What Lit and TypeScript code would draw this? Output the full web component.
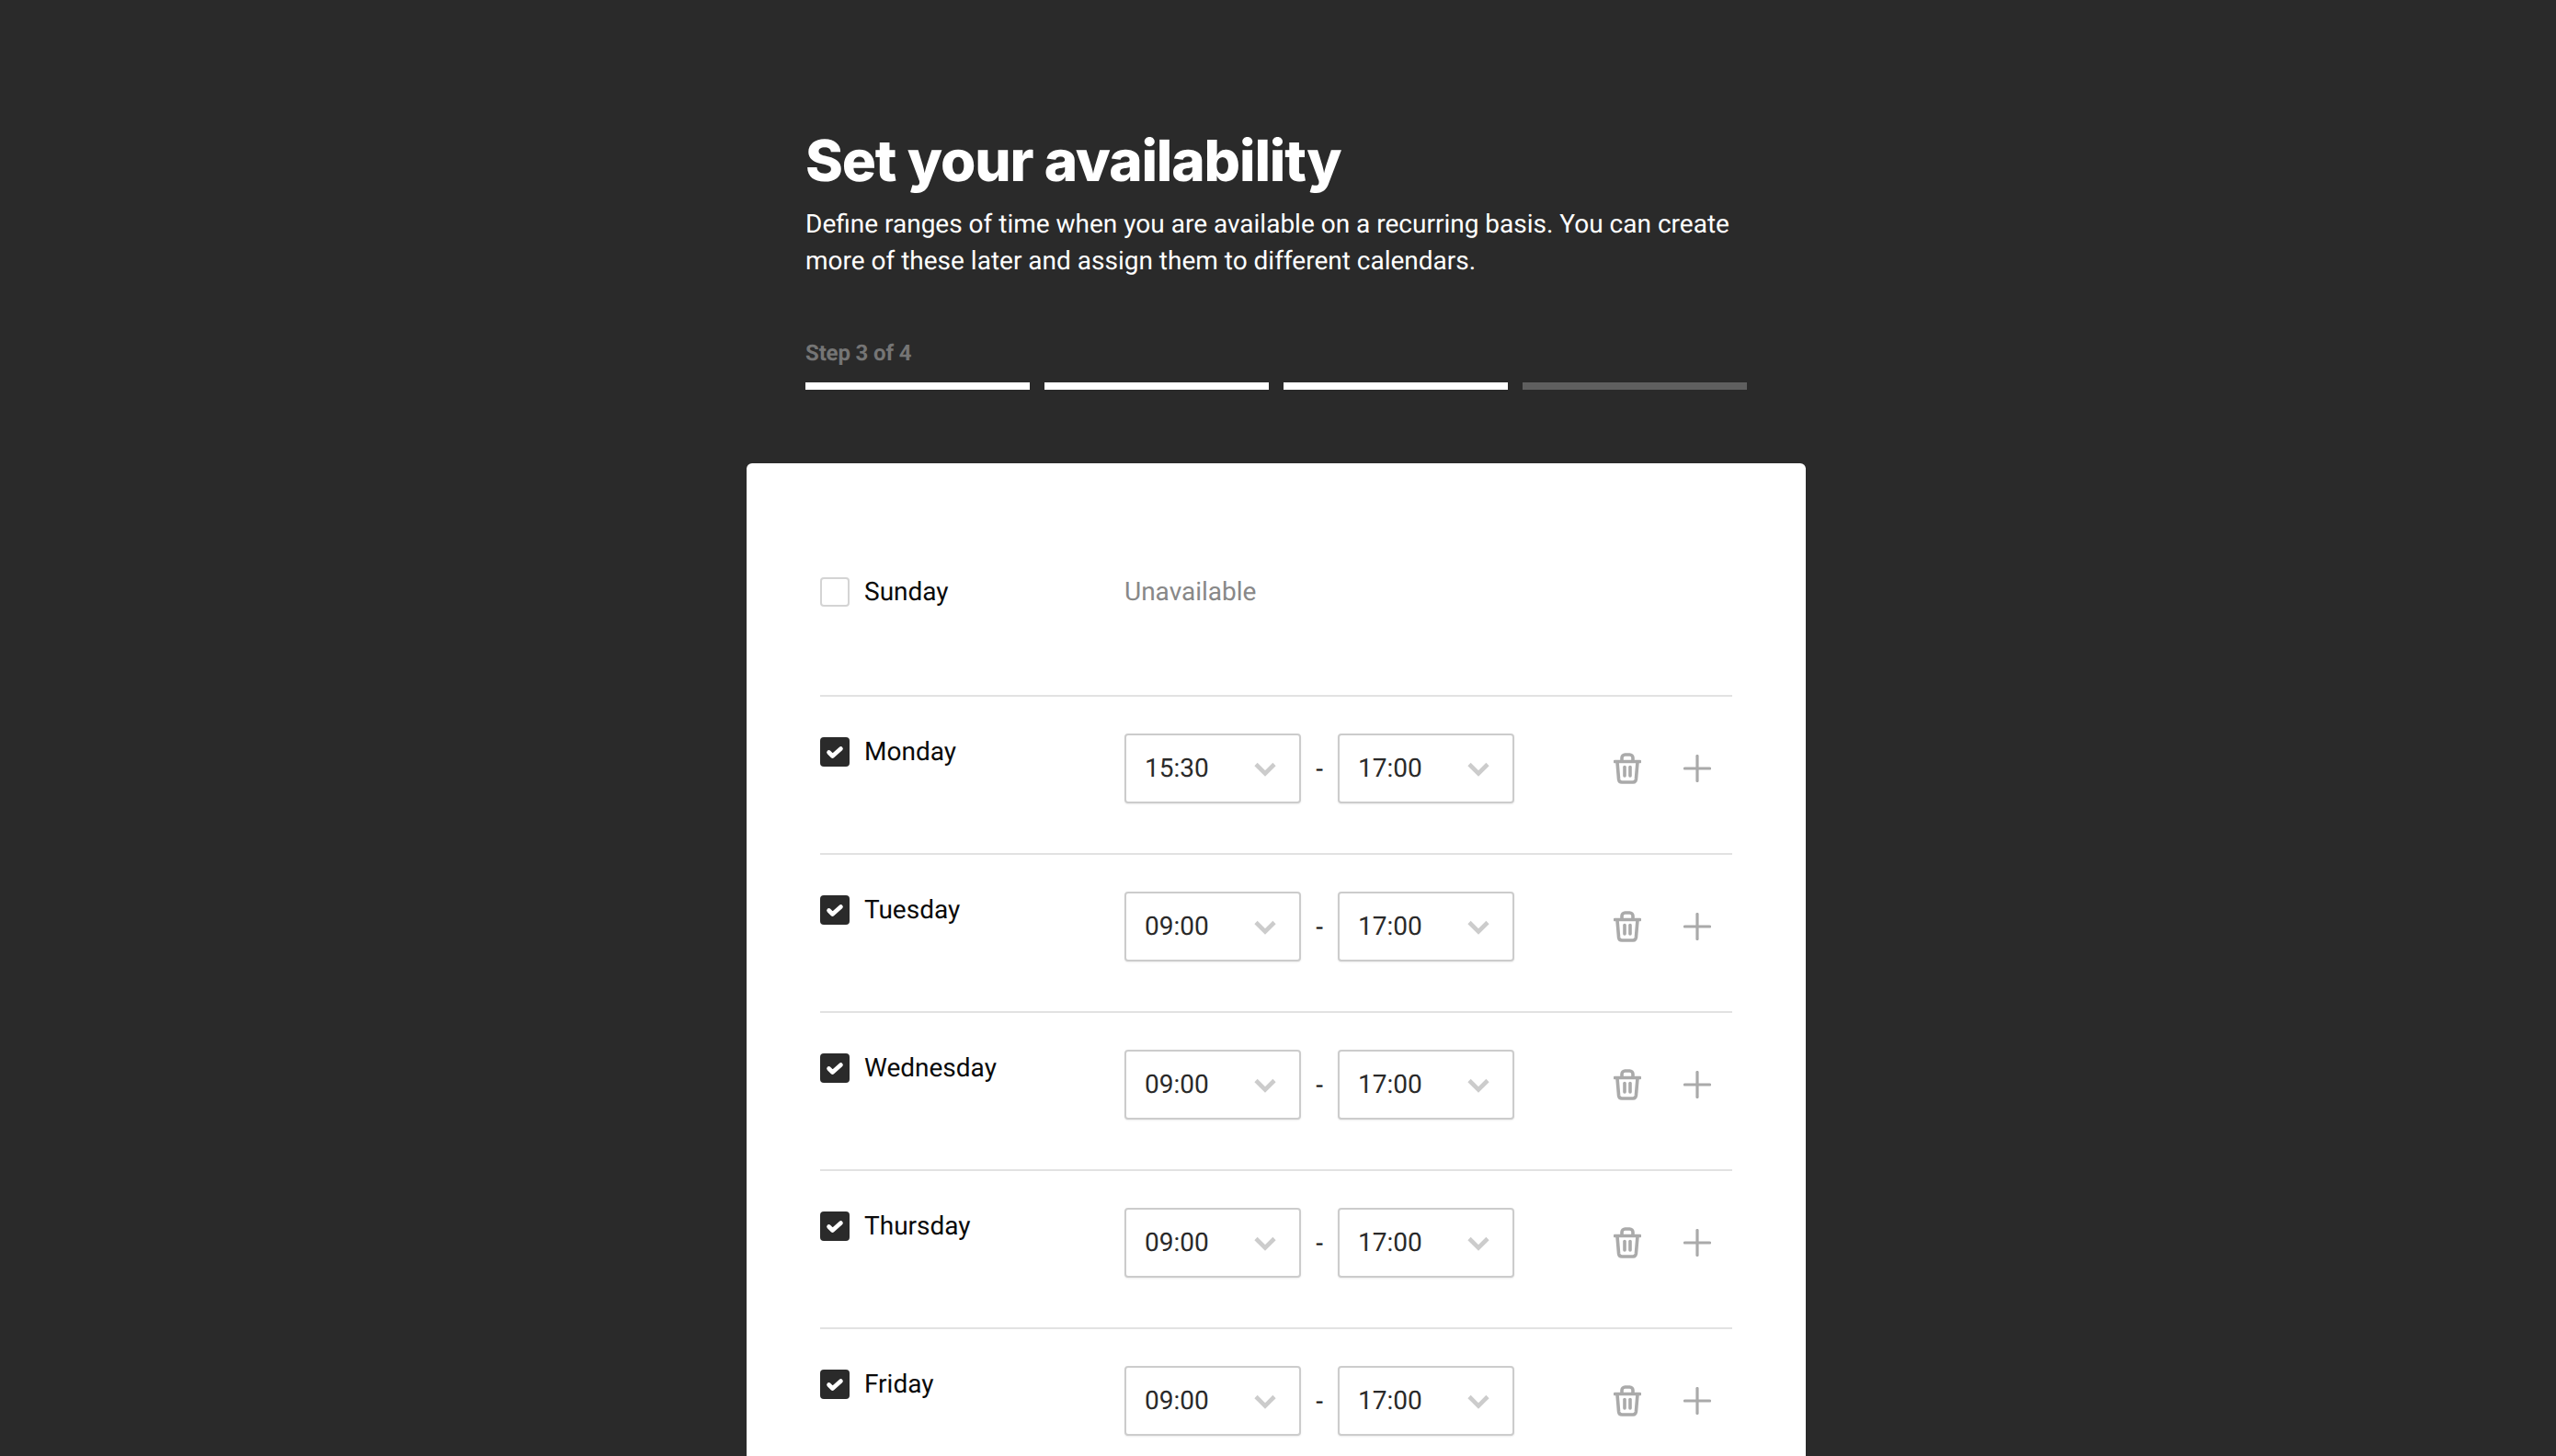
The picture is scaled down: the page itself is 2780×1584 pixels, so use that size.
import { LitElement, html, css, svg } from "lit";
import { customElement } from "lit/decorators.js";

const chevron = html`<svg class="chev" width="28" height="18" viewBox="0 0 28 18"><path d="M4 3.5 L14 13.5 L24 3.5" fill="none" stroke="#cccccc" stroke-width="4.6"/></svg>`;
const trash = html`<svg class="trash" width="30" height="34" viewBox="0 0 30 34" fill="none" stroke="#aaaaaa" stroke-width="3.6" stroke-linecap="round" stroke-linejoin="round">
  ${svg`<path d="M1.5 9.5 H28.5"/><path d="M9 9 V5.5 a3.5 3.5 0 0 1 3.5-3.5 h5 a3.5 3.5 0 0 1 3.5 3.5 V9"/><path d="M4 10 l1.6 19 a3.5 3.5 0 0 0 3.5 3 h11.8 a3.5 3.5 0 0 0 3.5-3 L26 10"/><path d="M12 15.5 V25"/><path d="M18 15.5 V25"/>`}
</svg>`;
const plus = html`<svg class="plus" width="30" height="30" viewBox="0 0 30 30" fill="none" stroke="#aaaaaa" stroke-width="3.2" stroke-linecap="round"><path d="M15 1.5 V28.5"/><path d="M1.5 15 H28.5"/></svg>`;
const check = html`<svg width="32" height="32" viewBox="0 0 32 32" fill="none"><path d="M9.5 16.5 L13.5 20.5 L22.5 12.5" stroke="#ffffff" stroke-width="4.6" stroke-linecap="round" stroke-linejoin="round"/></svg>`;

const days: [string, string][] = [
  ["Monday", "15:30"],
  ["Tuesday", "09:00"],
  ["Wednesday", "09:00"],
  ["Thursday", "09:00"],
  ["Friday", "09:00"],
  ["Saturday", "09:00"],
];

@customElement("app-root")
export class AppRoot extends LitElement {
  static styles = css`
    :host { display: block; height: 1584px; overflow: hidden; background: #2a2a2a; font-family: Roboto, sans-serif; text-rendering: geometricPrecision; }
    .page { width: 1152px; margin-left: 812px; padding-top: 137px; }
    .head { padding: 0 64px; color: #fff; }
    h1 { margin: 0; font: 800 62px/76px Inter, sans-serif; letter-spacing: -1.15px; color: #fff; }
    .desc { margin: 11px 0 0; font-size: 28px; line-height: 40px; font-weight: 400; }
    .step { margin-top: 66px; font-size: 24px; line-height: 28px; font-weight: 700; letter-spacing: -0.15px; color: #757575; }
    .bars { display: flex; gap: 16px; margin-top: 18px; }
    .bar { flex: 1; height: 8px; background: #fff; }
    .bar.off { background: #5f5f5f; }
    .card { margin-top: 80px; background: #fff; border-radius: 6px; padding: 80px 80px 0; }
    .row { display: flex; align-items: flex-start; height: 172px; box-sizing: border-box; border-top: 2px solid #e2e2e2; padding-top: 40px; }
    .row.first { border-top: 0; height: 172px; padding-top: 44px; }
    .day { width: 331px; display: flex; align-items: center; gap: 16px; font-size: 28px; line-height: 32px; color: #0a0a0a; margin-top: 4px; flex: none; }
    .row.first .day { margin-top: 0; }
    .box { width: 32px; height: 32px; box-sizing: border-box; border-radius: 4px; flex: none; display: block; }
    .box.on { background: #2a2a2a; }
    .box.off { border: 2px solid #d4d4d4; background: #fff; }
    .box svg { display: block; }
    .un { font-size: 28px; line-height: 32px; color: #888; }
    .times { display: flex; align-items: center; }
    .sel { width: 192px; height: 76px; box-sizing: border-box; border: 2px solid #cccccc; border-radius: 4px; background: #fff; box-shadow: 0 1px 2px rgba(0,0,0,.08); display: flex; align-items: center; justify-content: space-between; padding: 0 23px 0 20px; font-size: 28px; color: #2a2a2a; }
    .sel span { margin-top: -1px; }
    .chev { display: block; margin-top: 2px; }
    .dash { width: 40px; text-align: center; font-size: 28px; color: #111; }
    .actions { margin-left: auto; height: 76px; display: flex; align-items: center; gap: 46px; padding-right: 23px; }
    .actions svg { display: block; }
  `;

  render() {
    return html`<div class="page">
      <div class="head">
        <h1>Set your availability</h1>
        <p class="desc">Define ranges of time when you are available on a recurring basis. You can create more of these later and assign them to different calendars.</p>
        <div class="step">Step 3 of 4</div>
        <div class="bars"><div class="bar"></div><div class="bar"></div><div class="bar"></div><div class="bar off"></div></div>
      </div>
      <div class="card">
        <div class="row first">
          <div class="day"><span class="box off"></span>Sunday</div>
          <div class="un">Unavailable</div>
        </div>
        ${days.map(([d, t]) => html`<div class="row">
          <div class="day"><span class="box on">${check}</span>${d}</div>
          <div class="times">
            <div class="sel"><span>${t}</span>${chevron}</div>
            <div class="dash">-</div>
            <div class="sel"><span>17:00</span>${chevron}</div>
          </div>
          <div class="actions">${trash}${plus}</div>
        </div>`)}
      </div>
    </div>`;
  }
}
